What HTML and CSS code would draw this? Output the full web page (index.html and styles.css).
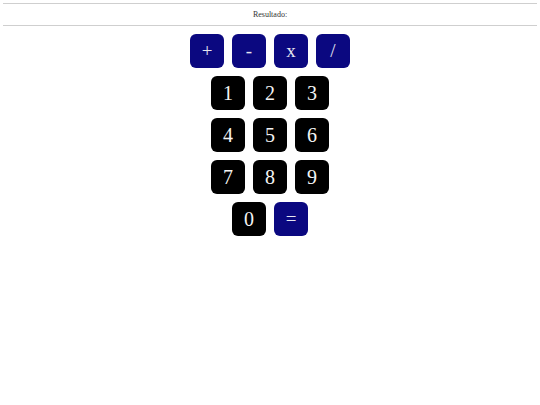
FILE: index.html
```html
<!DOCTYPE html>
<html lang="pt">
<head>
  <meta charset="UTF-8" />
  <title>Calculadora</title>
  <link rel="stylesheet" href="styles.css">
</head>
<body>
  <div class="display">Resultado: <span id="resultado"></span></div>

  <main class="keypad">
    <div class="row">
      <button class="key op">+</button>
      <button class="key op">-</button>
      <button class="key op">x</button>
      <button class="key op">/</button>
    </div>
    <div class="row">
      <button class="key">1</button>
      <button class="key">2</button>
      <button class="key">3</button>
    </div>
    <div class="row">
      <button class="key">4</button>
      <button class="key">5</button>
      <button class="key">6</button>
    </div>
    <div class="row">
      <button class="key">7</button>
      <button class="key">8</button>
      <button class="key">9</button>
    </div>
    <div class="row">
      <button class="key">0</button>
      <button class="key op">=</button>
    </div>
  </main>
</body>
</html>
```

FILE: styles.css
```css
* { margin: 0; padding: 0; box-sizing: border-box; }

body {
  font-family: 'Liberation Serif', 'Times New Roman', serif;
  background-color: #fff;
  color: #333;
  padding: 3px;
}

.display {
  border-top: 1px solid #cfcfcf;
  border-bottom: 1px solid #cfcfcf;
  height: 23px;
  display: flex;
  align-items: center;
  justify-content: center;
  font-size: 8px;
  color: #333;
}

.keypad {
  display: flex;
  flex-direction: column;
  align-items: center;
  gap: 8px;
  margin-top: 8px;
}

.row {
  display: flex;
  gap: 8px;
}

.key {
  width: 34px;
  height: 34px;
  border: none;
  border-radius: 6px;
  background-color: #000;
  color: #f4f4f4;
  font-family: 'Liberation Serif', 'Times New Roman', serif;
  font-size: 20px;
  cursor: pointer;
}

.key.op {
  background-color: #0b0880;
  color: #e6e6f0;
  font-size: 19px;
}
```
